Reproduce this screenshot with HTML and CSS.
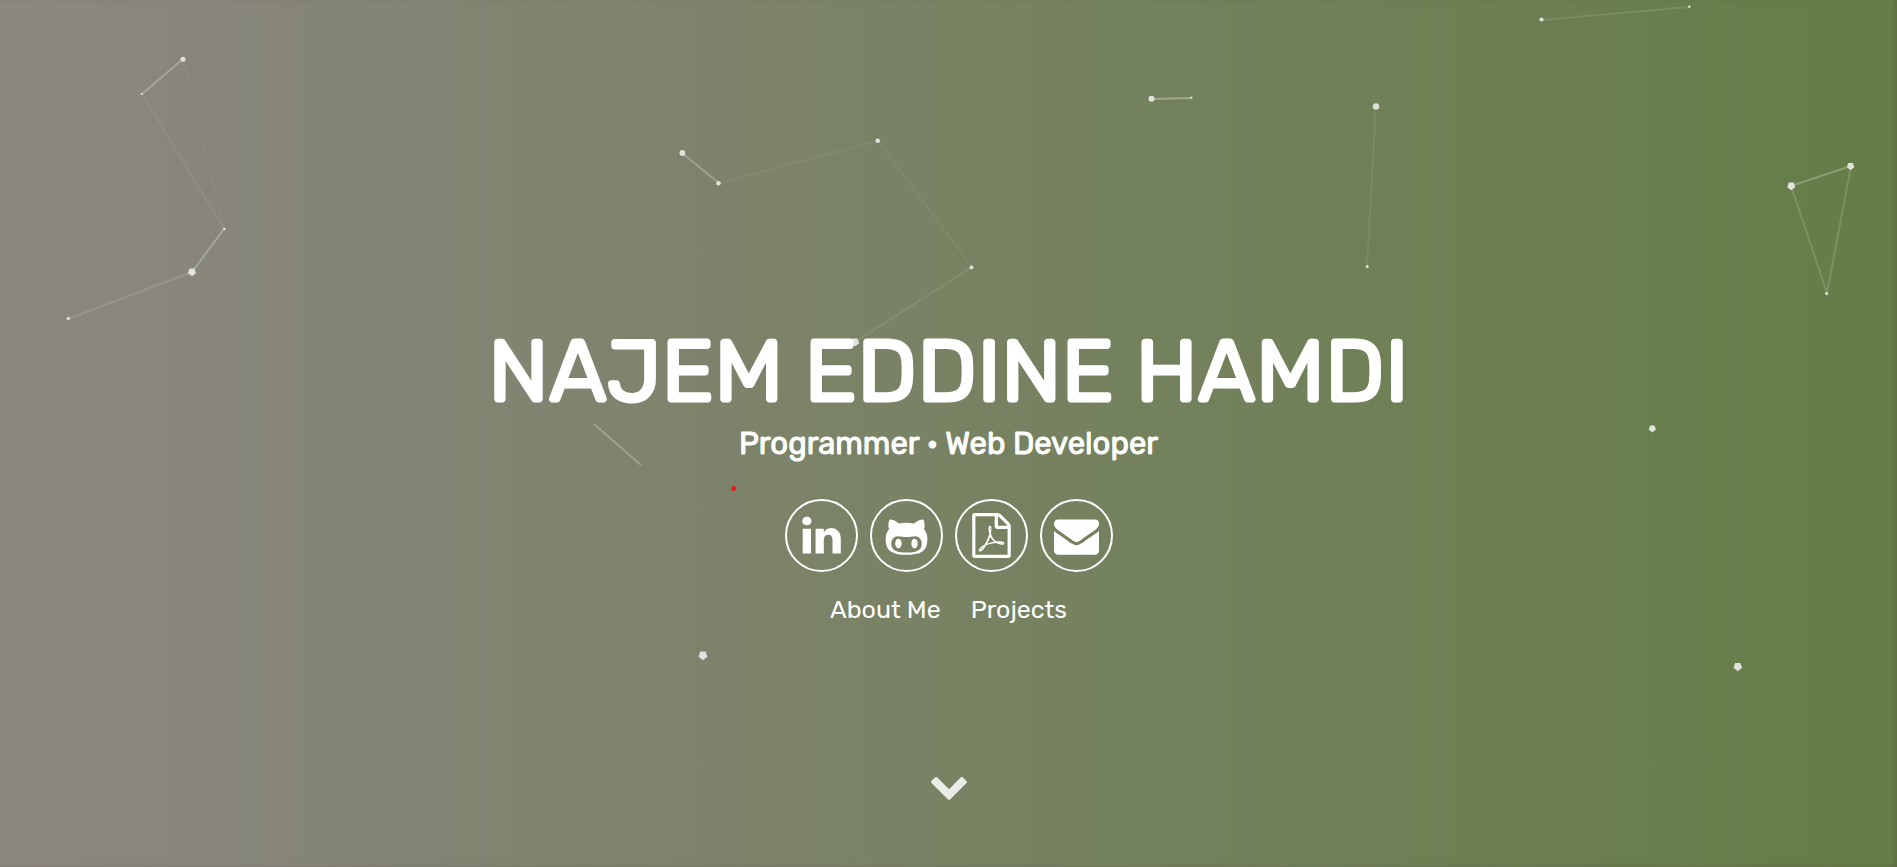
FILE: index.html
```html
<!DOCTYPE html>
<html lang="en">
<head>
<meta charset="utf-8">
<meta name="viewport" content="width=device-width, initial-scale=1">
<title>Najem Eddine Hamdi</title>
<link rel="stylesheet" href="styles.css">
</head>
<body>
<main class="hero">
  <svg class="particles" viewBox="0 0 1897 867" preserveAspectRatio="xMidYMid slice" aria-hidden="true">
    <defs>
      <path id="node" d="M-.6-.84H.6L.98.28L0 1.05L-.98.28Z"/>
    </defs>
    <g class="links">
      <path opacity=".25" d="M183 59L142 94"/>
      <path opacity=".06" d="M142 94L224 229"/>
      <path opacity=".03" d="M183 59L224 229"/>
      <path opacity=".25" d="M224 229L192 272"/>
      <path opacity=".12" d="M192 272L68 319"/>
      <path opacity=".25" d="M682 153L719 183"/>
      <path opacity=".05" d="M719 183L878 141"/>
      <path opacity=".05" d="M878 141L972 267"/>
      <path opacity=".09" d="M972 267L855 342"/>
      <path opacity=".24" d="M594 424L641 465"/>
      <path opacity=".32" d="M1152 99L1192 98"/>
      <path opacity=".07" d="M1376 106L1367 266"/>
      <path opacity=".11" d="M1542 20L1689 7"/>
      <path opacity=".25" d="M1791 186L1851 166"/>
      <path opacity=".15" d="M1791 186L1827 293L1851 166"/>
    </g>
    <g class="nodes">
      <circle cx="183" cy="59.3" r="2.5"/>
      <circle cx="141.6" cy="94" r="1.1"/>
      <circle cx="224.4" cy="229" r="1.3"/>
      <circle cx="68.3" cy="318.5" r="1.7"/>
      <circle cx="682.4" cy="153" r="2.9"/>
      <circle cx="718.5" cy="183.2" r="2.2"/>
      <circle cx="877.7" cy="140.7" r="2.3"/>
      <circle cx="971.5" cy="267.4" r="1.9"/>
      <circle cx="1151.5" cy="98.7" r="3"/>
      <circle cx="1191.5" cy="97.7" r="1.1"/>
      <circle cx="1376" cy="106.4" r="3.2"/>
      <circle cx="1367.2" cy="266.4" r="1.5"/>
      <circle cx="1541.5" cy="19.5" r="2.1"/>
      <circle cx="1689.3" cy="6.8" r="1.2"/>
      <circle cx="1826.6" cy="293.4" r="1.5"/>
      <use href="#node" transform="translate(192 272) scale(4.1)"/>
      <use href="#node" transform="translate(855 342) scale(4.3)"/>
      <use href="#node" transform="translate(1791.2 186) scale(4.1)"/>
      <use href="#node" transform="translate(1850.6 166.2) scale(3.8)"/>
      <use href="#node" transform="translate(1652.3 428.5) scale(3.7)"/>
      <use href="#node" transform="translate(703 655.4) scale(4.5)"/>
      <use href="#node" transform="translate(1737.8 666.6) scale(4.4)"/>
    </g>
    <circle class="pointer" cx="733.7" cy="488.6" r="2.5"/>
  </svg>

  <div class="intro">
    <h1 class="name">NAJEM EDDINE HAMDI</h1>
    <h2 class="role">Programmer • Web Developer</h2>
    <div class="social">
      <a class="social-link" href="#linkedin" aria-label="LinkedIn">
        <svg class="icon" viewBox="0 0 1792 1792"><path d="M477 625v991h-330v-991h330zm21-306q1 73-50.500 122t-135.500 49h-2q-82 0-132-49t-50-122q0-74 51.500-122.500t134.500-48.500 133 48.500 51 122.500zm1166 729v568h-329v-530q0-105-40.500-164.500t-126.500-59.500q-63 0-105.500 34.500t-63.500 85.500q-11 30-11 81v553h-329q2-399 2-647t-1-296l-1-48h329v144h-2q20-32 41-56t56.500-52 87-43.500 114.500-15.500q171 0 275 113.500t104 332.500z"/></svg>
      </a>
      <a class="social-link" href="#github" aria-label="GitHub">
        <svg class="icon" viewBox="0 0 1792 1792"><path d="M704 1216q0 40-12.500 82t-43 76-72.500 34-72.500-34-43-76-12.500-82 12.500-82 43-76 72.500-34 72.500 34 43 76 12.500 82zm640 0q0 40-12.500 82t-43 76-72.500 34-72.500-34-43-76-12.500-82 12.500-82 43-76 72.500-34 72.500 34 43 76 12.500 82zm160 0q0-120-69-204t-187-84q-41 0-195 21-71 11-157 11t-157-11q-152-21-195-21-118 0-187 84t-69 204q0 88 32 153.500t81 103 122 60 140 29.500 149 7h168q82 0 149-7t140-29.500 122-60 81-103 32-153.500zm224-176q0 207-61 331-38 77-105.500 133t-141 86-170 47.500-171.500 22-167 4.500q-78 0-142-3t-147.500-12.500-152.500-30-137-51.500-121-81-86-115q-62-123-62-331 0-237 136-396-27-82-27-170 0-116 51-218 108 0 190 39.500t189 123.500q147-35 309-35 148 0 280 32 105-82 187-121t189-39q51 102 51 218 0 87-27 168 136 160 136 398z"/></svg>
      </a>
      <a class="social-link" href="#resume" aria-label="Resume (PDF)">
        <svg class="icon" viewBox="0 0 1792 1792"><path d="M1596 380q28 28 48 76t20 88v1152q0 40-28 68t-68 28h-1344q-40 0-68-28t-28-68v-1600q0-40 28-68t68-28h896q40 0 88 20t76 48zm-444-244v376h376q-10-29-22-41l-313-313q-12-12-41-22zm384 1528v-1024h-416q-40 0-68-28t-28-68v-416h-768v1536h1280zm-514-593q33 26 84 56 59-7 117-7 147 0 177 49 16 22 2 52 0 1-1 2l-2 2v1q-6 38-71 38-48 0-115-20t-130-53q-221 24-392 83-153 262-242 262-15 0-28-7l-24-12q-1-1-6-5-10-10-6-36 9-40 56-91.500t132-96.500q14-9 23 6 2 2 2 4 52-85 107-197 68-136 104-262-24-82-30.500-159.500t6.500-127.500q11-40 42-40h22q23 0 35 15 18 21 9 68-2 6-4 8 1 3 1 8v30q-2 123-14 192 55 164 146 238zm-576 411q52-24 137-158-51 40-87.500 84t-49.500 74zm398-920q-15 42-2 132 1-7 7-44 0-3 7-43 1-4 4-8-1-1-1-2t-1-2-1-3q-1-22-13-36 0 1-1 2v2zm-124 661q135-54 284-81-2-1-13-9.500t-16-13.500q-76-67-127-176-27 86-83 197-30 56-45 83zm646-16q-24-24-140-24 76 28 124 28 14 0 18-1 0-1-2-3z"/></svg>
      </a>
      <a class="social-link" href="#email" aria-label="Email">
        <svg class="icon" viewBox="0 0 1792 1792"><path d="M1792 710v794q0 66-47 113t-113 47h-1472q-66 0-113-47t-47-113v-794q44 49 101 87 362 246 497 345 57 42 92.500 65.500t94.500 48 110 24.500h2q51 0 110-24.500t94.500-48 92.500-65.500q170-123 498-345 57-39 100-87zm0-294q0 79-49 151t-122 123q-376 261-468 325-10 7-42.500 31t-54 38-52 32.500-57.500 27-50 9h-2q-23 0-50-9t-57.500-27-52-32.500-54-38-42.500-31q-91-64-262-182.500t-205-142.500q-62-42-117-115.500t-55-136.500q0-78 41.500-130t118.500-52h1472q65 0 112.500 47t47.500 113z"/></svg>
      </a>
    </div>
    <nav class="menu">
      <a class="menu-link" href="#about">About Me</a>
      <a class="menu-link" href="#projects">Projects</a>
    </nav>
  </div>

  <a class="scroll-down" href="#about" aria-label="Scroll down">
    <svg class="chevron" viewBox="0 0 1792 1792"><path d="M1683 808l-742 741q-19 19-45 19t-45-19l-742-741q-19-19-19-45.500t19-45.500l166-165q19-19 45-19t45 19l531 531 531-531q19-19 45-19t45 19l166 165q19 19 19 45.500t-19 45.500z"/></svg>
  </a>
</main>
</body>
</html>
```
FILE: styles.css
```css
* {
  box-sizing: border-box;
}

body {
  margin: 0;
  color: #fff;
  font-family: Rubik, Roboto, "Liberation Sans", sans-serif;
}

a {
  color: inherit;
  text-decoration: none;
}

.hero {
  position: relative;
  display: grid;
  grid-template-rows: 1fr auto;
  justify-items: center;
  min-height: 100vh;
  padding: 324px 16px 62px;
  overflow: hidden;
  background: linear-gradient(90deg, #8c8781, #647d46);
  box-shadow: inset -3px -1px 4px -1px rgba(80, 70, 60, 0.3);
}

.particles {
  position: absolute;
  inset: 0;
  width: 100%;
  height: 100%;
}

.links {
  fill: none;
  stroke: #fff;
  stroke-width: 2;
}

.nodes {
  fill: #e0e3dc;
}

.pointer {
  fill: #e51e1e;
}

.intro {
  position: relative;
  display: flex;
  flex-direction: column;
  align-items: center;
  text-align: center;
}

.name {
  margin: 0;
  font-size: 87px;
  font-weight: 400;
  line-height: 96px;
  -webkit-text-stroke: 3px #fff;
}

.role {
  margin: 2px 0 0;
  font-size: 31px;
  font-weight: 400;
  line-height: 44px;
  -webkit-text-stroke: 1px #fff;
}

.social {
  display: flex;
  gap: 12px;
  margin-top: 33px;
}

.social-link {
  display: grid;
  place-items: center;
  width: 73px;
  height: 73px;
  border: 2px solid #fff;
  border-radius: 50%;
}

.icon {
  width: 45px;
  height: 45px;
  fill: #fff;
}

.menu {
  display: flex;
  gap: 30px;
  margin-top: 22px;
}

.menu-link {
  font-size: 25px;
  line-height: 32px;
}

.scroll-down {
  position: relative;
  display: block;
}

.chevron {
  display: block;
  width: 40px;
  height: 40px;
  fill: #fff;
  opacity: 0.85;
}
```
